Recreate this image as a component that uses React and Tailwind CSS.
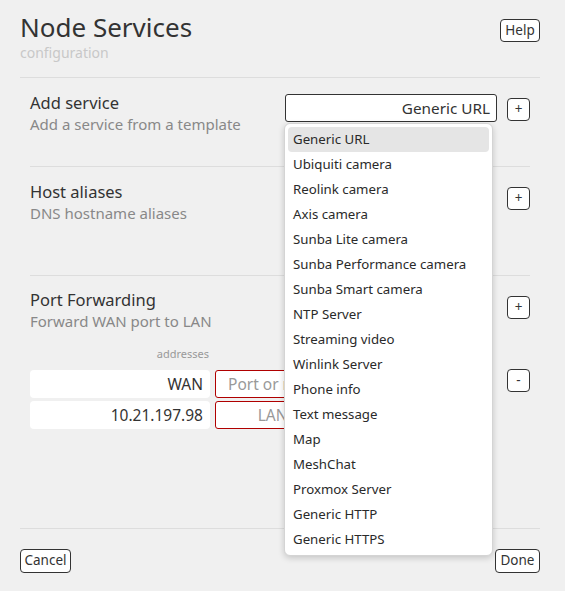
import React from 'react';

const templates = [
  'Generic URL',
  'Ubiquiti camera',
  'Reolink camera',
  'Axis camera',
  'Sunba Lite camera',
  'Sunba Performance camera',
  'Sunba Smart camera',
  'NTP Server',
  'Streaming video',
  'Winlink Server',
  'Phone info',
  'Text message',
  'Map',
  'MeshChat',
  'Proxmox Server',
  'Generic HTTP',
  'Generic HTTPS',
];

function SmallButton({ children, className = '' }) {
  return (
    <button
      className={`flex items-center justify-center rounded-[4px] border border-[#333] bg-white text-[13.5px] leading-none text-[#333] ${className}`}
    >
      {children}
    </button>
  );
}

export default function App() {
  return (
    <div className="min-h-[591px] w-[565px] bg-[#f0f0f0] pl-5 pr-[25px] pt-3 font-['Noto_Sans',sans-serif] text-[#333]">
      {/* header */}
      <div className="flex items-start justify-between border-b border-[#ddd] pb-[16px]">
        <div>
          <div className="text-[26px] leading-[30px]">Node Services</div>
          <div className="mt-[2px] text-[14px] leading-[17px] text-[#c8c8c8]">configuration</div>
        </div>
        <SmallButton className="mt-[7px] h-[23px] w-[40px]">Help</SmallButton>
      </div>

      <div className="px-[10px]">
        {/* add service */}
        <div className="flex h-[89px] items-start justify-between border-b border-[#ddd]">
          <div className="pt-[14px]">
            <div className="text-[16.5px] leading-[21px]">Add service</div>
            <div className="text-[15px] leading-[23px] text-[#888]">Add a service from a template</div>
          </div>
          <div className="mt-[16px] flex items-start gap-[10px]">
            <div className="relative">
              <div className="flex h-[28px] w-[212px] items-center justify-end rounded-[3px] border border-[#333] bg-white pr-[6px] text-[15.3px]">
                Generic URL
              </div>
              <div className="absolute -left-[1px] top-[29px] z-10 w-[209px] rounded-[6px] border border-[#d4d4d4] bg-white p-[3px] shadow-[0_2px_6px_rgba(0,0,0,0.18)]">
                {templates.map((t, i) => (
                  <div
                    key={t}
                    className={`flex h-[25px] items-center rounded-[4px] pl-[5px] text-[13.25px] text-[#2a2a2a] ${
                      i === 0 ? 'bg-[#e5e5e5]' : ''
                    }`}
                  >
                    {t}
                  </div>
                ))}
              </div>
            </div>
            <SmallButton className="mt-[4px] h-[23px] w-[23px]">+</SmallButton>
          </div>
        </div>

        {/* host aliases */}
        <div className="flex h-[109px] items-start justify-between border-b border-[#ddd]">
          <div className="pt-[14px]">
            <div className="text-[16.5px] leading-[21px]">Host aliases</div>
            <div className="text-[15px] leading-[22px] text-[#888]">DNS hostname aliases</div>
          </div>
          <SmallButton className="mt-[20px] h-[23px] w-[23px]">+</SmallButton>
        </div>

        {/* port forwarding */}
        <div className="h-[252px]">
          <div className="flex items-start justify-between">
            <div className="pt-[13px]">
              <div className="text-[16.5px] leading-[21px]">Port Forwarding</div>
              <div className="text-[15px] leading-[23px] text-[#888]">Forward WAN port to LAN</div>
            </div>
            <SmallButton className="mt-[20px] h-[23px] w-[23px]">+</SmallButton>
          </div>
          <div className="mt-[14px] flex items-start">
            <div className="flex flex-col gap-[3px]">
              <div className="w-[180px] pr-[1px] text-right text-[11px] leading-[14px] text-[#999]">addresses</div>
              <div className="h-[3px]" />
              <div className="flex gap-[5px]">
                <div className="h-[28px] w-[180px] rounded-[4px] bg-white pr-[7px] text-right text-[15.5px] leading-[28px]">WAN</div>
                <input
                  placeholder="Port or range"
                  className="h-[28px] w-[150px] rounded-[3px] border border-[#b00000] bg-white px-[12px] text-[15.5px] outline-none placeholder:text-[#999]"
                />
              </div>
              <div className="flex gap-[5px]">
                <div className="h-[28px] w-[180px] rounded-[4px] bg-white pr-[7px] text-right text-[15.5px] leading-[28px]">10.21.197.98</div>
                <input
                  placeholder="LAN port"
                  className="h-[28px] w-[150px] rounded-[3px] border border-[#b00000] bg-white px-[12px] text-center text-[15.5px] outline-none placeholder:text-[#999]"
                />
              </div>
            </div>
            <SmallButton className="ml-auto mt-[22px] h-[23px] w-[23px]">-</SmallButton>
          </div>
        </div>
      </div>

      {/* footer */}
      <div className="flex items-start justify-between border-t border-[#ddd] pt-[20px]">
        <SmallButton className="h-[24px] w-[51px]">Cancel</SmallButton>
        <SmallButton className="h-[24px] w-[45px]">Done</SmallButton>
      </div>
    </div>
  );
}
